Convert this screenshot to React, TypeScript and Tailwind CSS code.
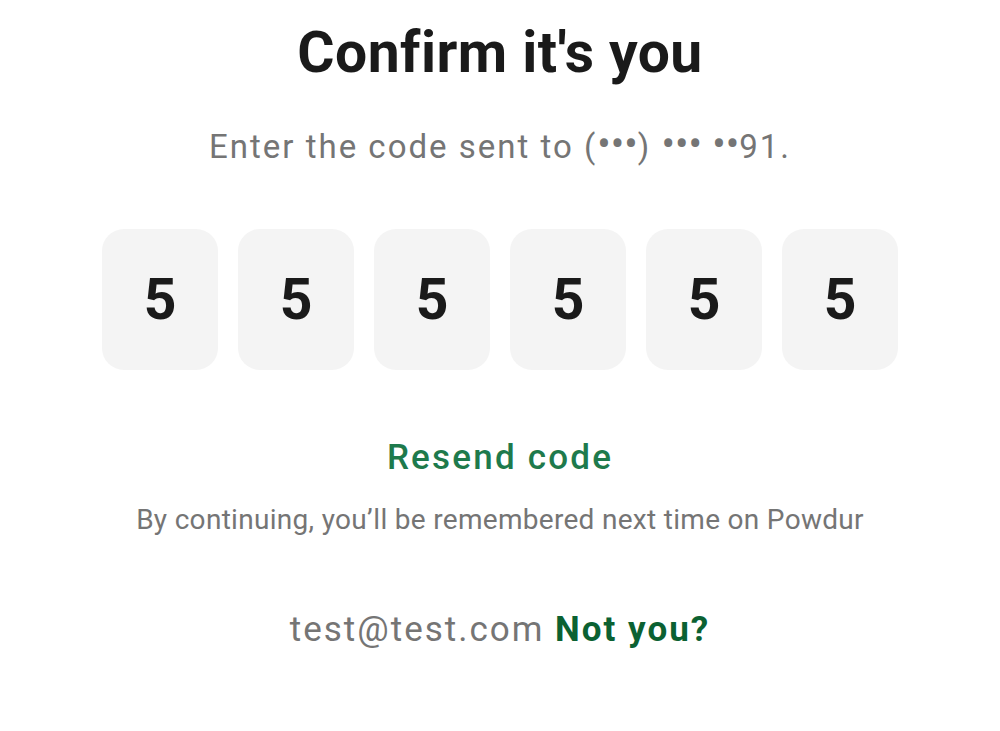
import React from "react";

function Dots({ n }: { n: number }) {
  return <span className="text-[40px] tracking-[0px]">{"•".repeat(n)}</span>;
}

export default function App() {
  const digits = ["5", "5", "5", "5", "5", "5"];
  return (
    <div
      className="w-[1000px] h-[731px] bg-white flex flex-col items-center overflow-hidden"
      style={{ fontFamily: "Roboto, 'Noto Sans', sans-serif" }}
    >
      <h1 className="mt-[24px] text-[57px] leading-[57px] font-bold text-[#1a1a1a] tracking-[0.45px]">
        Confirm it's you
      </h1>
      <p className="mt-[47px] h-[33px] text-[33px] leading-[33px] text-[#757575] tracking-[2px] whitespace-nowrap">
        Enter the code sent to (<Dots n={3} />) <Dots n={3} /> <Dots n={2} />91.
      </p>
      <div className="mt-[68px] flex gap-[20px]">
        {digits.map((d, i) => (
          <div
            key={i}
            className="w-[116px] h-[141px] rounded-[22px] bg-[#f4f4f4] flex items-center justify-center text-[57px] font-bold text-[#1a1a1a]"
          >
            {d}
          </div>
        ))}
      </div>
      <button className="mt-[70px] text-[35px] leading-[35px] font-medium text-[#1e7a4c] tracking-[2.2px]">
        Resend code
      </button>
      <p className="mt-[31px] text-[28px] leading-[28px] text-[#757575] tracking-[0.3px]">
        By continuing, you’ll be remembered next time on Powdur
      </p>
      <p className="mt-[78px] text-[35px] leading-[35px] text-[#757575] tracking-[2px]">
        test@test.com <span className="font-bold text-[#0b6132]">Not you?</span>
      </p>
    </div>
  );
}
